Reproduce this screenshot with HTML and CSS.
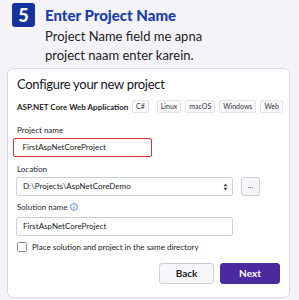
FILE: index.html
```html
<!DOCTYPE html>
<html>
<head>
<meta charset="utf-8">
<link rel="stylesheet" href="styles.css">
</head>
<body>
<div class="header">
  <div class="badge">5</div>
  <div class="head-text">
    <div class="title">Enter Project Name</div>
    <div class="subtitle">Project Name field me apna<br>project naam enter karein.</div>
  </div>
</div>
<div class="card">
  <div class="card-title">Configure your new project</div>
  <div class="tags-row">
    <span class="app-name">ASP.NET Core Web Application</span>
    <div class="tags">
      <span class="tag">C#</span>
      <span class="tag">Linux</span>
      <span class="tag">macOS</span>
      <span class="tag">Windows</span>
      <span class="tag">Web</span>
    </div>
  </div>
  <div class="label l-project">Project name</div>
  <div class="input input-red">FirstAspNetCoreProject</div>
  <div class="label l-location">Location</div>
  <div class="loc-row">
    <div class="input input-loc">
      <span>D:\Projects\AspNetCoreDemo</span>
      <svg class="arrows" width="5" height="8" viewBox="0 0 5 8"><path d="M2.5 0.5 L4.5 3.2 L0.5 3.2 Z M2.5 7.5 L4.5 4.8 L0.5 4.8 Z" fill="#444"/></svg>
    </div>
    <div class="browse">...</div>
  </div>
  <div class="label l-solution">Solution name
    <svg class="info" width="8" height="8" viewBox="0 0 8 8"><circle cx="4" cy="4" r="3.4" fill="none" stroke="#3a6ee0" stroke-width="0.8"/><rect x="3.6" y="3.4" width="0.8" height="2.6" fill="#3a6ee0"/><rect x="3.6" y="2" width="0.8" height="0.8" fill="#3a6ee0"/></svg>
  </div>
  <div class="input input-sol">FirstAspNetCoreProject</div>
  <label class="check-row"><span class="checkbox"></span><span>Place solution and project in the same directory</span></label>
  <div class="buttons">
    <div class="btn btn-back">Back</div>
    <div class="btn btn-next">Next</div>
  </div>
</div>
</body>
</html>
```
FILE: styles.css
```css
* { box-sizing: border-box; }
body {
  margin: 0;
  background: #f4f4f8;
  font-family: "Lato", "Open Sans", sans-serif;
  color: #1e1e24;
  width: 299px;
  height: 300px;
  overflow: hidden;
}
.header {
  display: flex;
  gap: 10px;
  padding: 3px 0 0 12px;
  height: 68px;
}
.badge {
  width: 23px;
  height: 24px;
  background: #15339c;
  color: #fff;
  border-radius: 3px;
  font-weight: 900;
  font-size: 18px;
  line-height: 24px;
  text-align: center;
  flex: none;
}
.head-text { padding-top: 2px; }
.title {
  font-size: 15px;
  font-weight: 900;
  color: #1b3cae;
  line-height: 20px;
}
.subtitle {
  font-size: 13px;
  line-height: 18.5px;
  color: #222;
  margin-top: 2px;
}
.card {
  margin-left: 7px;
  width: 283px;
  height: 230px;
  border: 1px solid #d9d9e3;
  border-radius: 6px;
  background: #fff;
  padding: 5px 9px 0 9px;
}
.card-title {
  font-size: 13px;
  letter-spacing: -0.3px;
  line-height: 20px;
  color: #16161c;
}
.tags-row {
  display: flex;
  align-items: center;
  margin-top: 6px;
  height: 13px;
}
.app-name {
  font-size: 8px;
  font-weight: 700;
  width: 115px;
  flex: none;
}
.tags { display: flex; gap: 4px; }
.tag {
  font-size: 7px;
  line-height: 11px;
  height: 13px;
  padding: 0 3px;
  border: 1px solid #e4e4ea;
  border-radius: 2px;
  background: #fafafc;
  color: #333;
}
.tag:first-child { margin-right: 4px; }
.label {
  font-size: 8px;
  line-height: 12px;
  color: #2a2a30;
  display: flex;
  align-items: center;
  gap: 3px;
}
.l-project { margin-top: 11px; }
.l-location { margin-top: 6px; }
.l-solution { margin-top: 5px; }
.input {
  height: 19px;
  border: 1px solid #cfcfd8;
  border-radius: 2px;
  font-size: 8px;
  line-height: 17px;
  padding-left: 6px;
  color: #222;
  background: #fff;
}
.input-red {
  margin-top: 2px;
  margin-left: -4px;
  width: 139px;
  border: 1.5px solid #e53030;
  padding-left: 8.5px;
}
.loc-row {
  display: flex;
  gap: 8px;
  margin-top: 2px;
  margin-left: -1px;
}
.input-loc {
  width: 217px;
  display: flex;
  align-items: center;
  justify-content: space-between;
  padding-right: 4px;
}
.arrows { flex: none; }
.browse {
  width: 19px;
  height: 19px;
  border: 1px solid #cfcfd8;
  border-radius: 3px;
  background: #f6f6f8;
  font-size: 8px;
  line-height: 14px;
  text-align: center;
  color: #444;
}
.input-sol {
  margin-top: 4px;
  margin-left: -1px;
  width: 217px;
}
.check-row {
  display: flex;
  align-items: center;
  gap: 5px;
  margin-top: 5px;
  font-size: 8px;
  height: 11px;
  color: #222;
}
.checkbox {
  width: 10px;
  height: 10px;
  border: 1px solid #8a8a94;
  border-radius: 1.5px;
  background: #fff;
  flex: none;
}
.buttons {
  display: flex;
  justify-content: flex-end;
  gap: 6px;
  margin-top: 11px;
}
.btn {
  height: 21px;
  border-radius: 3px;
  font-size: 10px;
  font-weight: 700;
  line-height: 19px;
  text-align: center;
}
.btn-back {
  width: 55px;
  background: #f7f7f9;
  border: 1px solid #cfcfd8;
  color: #222;
}
.btn-next {
  width: 60px;
  background: #4a2a9e;
  border: 1px solid #4a2a9e;
  color: #fff;
}
```
